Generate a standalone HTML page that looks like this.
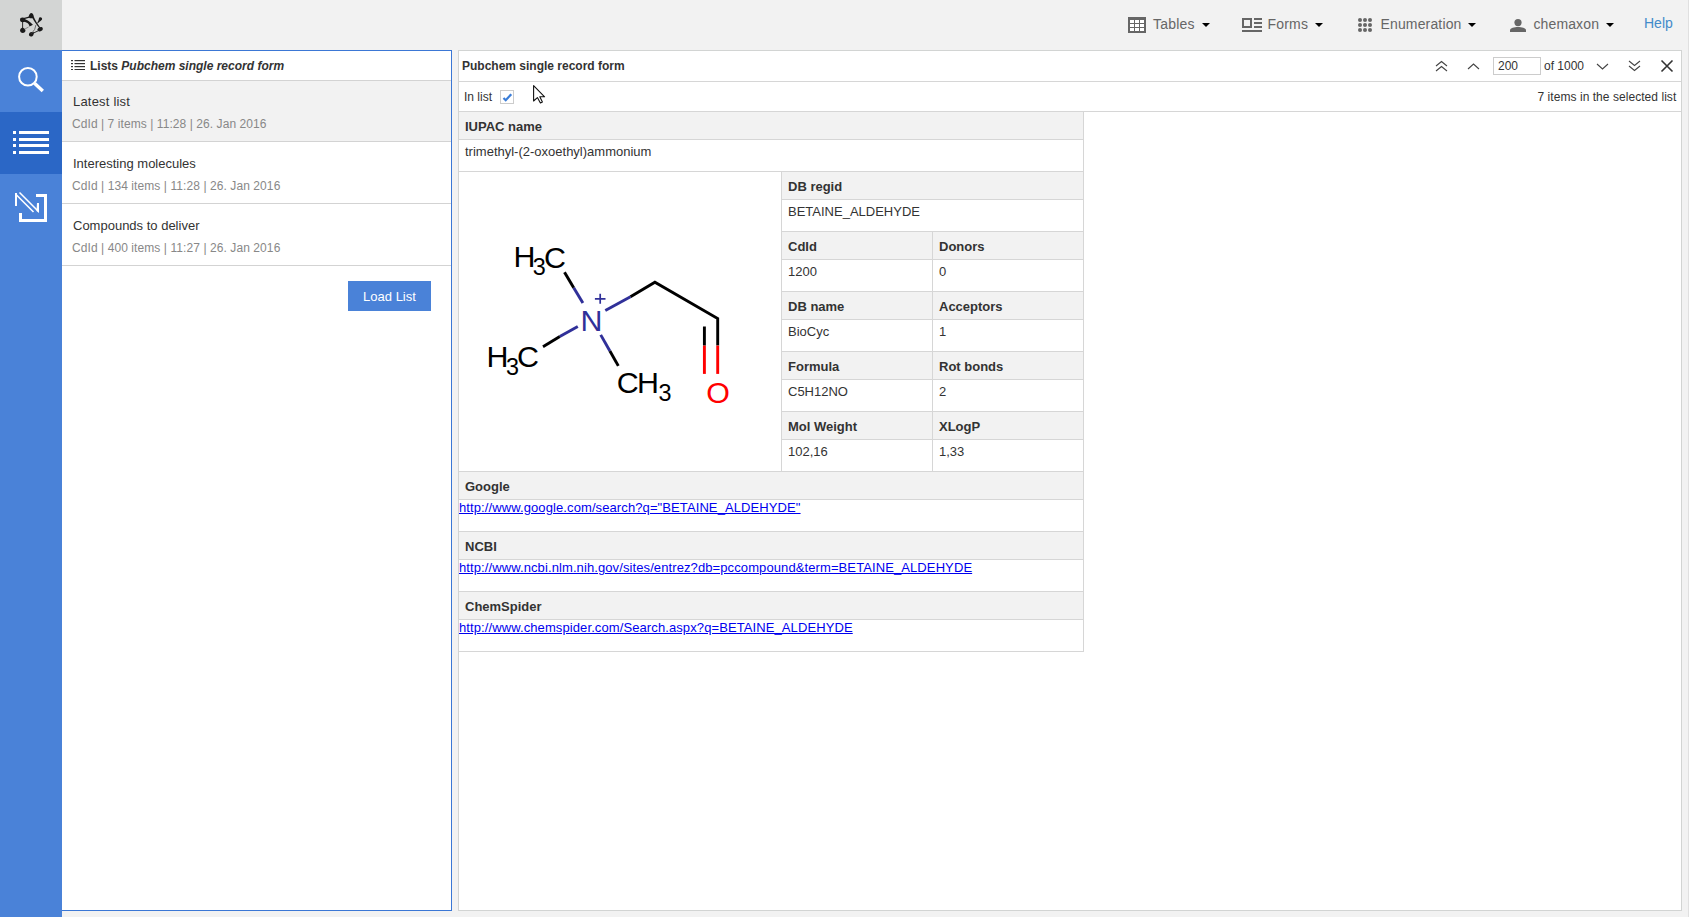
<!DOCTYPE html>
<html><head><meta charset="utf-8">
<style>
*{box-sizing:border-box}
html,body{margin:0;padding:0}
body{width:1689px;height:917px;overflow:hidden;position:relative;background:#f2f2f2;font-family:"Liberation Sans",sans-serif;color:#333}
.a{position:absolute}
.t12{font-size:12px;line-height:14px;white-space:nowrap}
.t13{font-size:13px;line-height:15px;white-space:nowrap}
.t14{font-size:14px;line-height:16px;white-space:nowrap}
.b{font-weight:bold}
</style></head><body>

<!-- top bar -->
<div class="a" style="left:0;top:0;width:62px;height:50px;background:#d3d5d4"></div>
<div class="a" style="left:1688px;top:0;width:1px;height:917px;background:#e0e0e0"></div>

<!-- left panel -->
<div class="a" style="left:61px;top:50px;width:391px;height:861px;border:1px solid #3b77d5;background:#fff"></div>

<!-- sidebar -->
<div class="a" style="left:0;top:50px;width:62px;height:867px;background:#4a82d8"></div>
<div class="a" style="left:0;top:112px;width:62px;height:62px;background:#2b67c6"></div>

<!-- right panel -->
<div class="a" style="left:458px;top:50px;width:1224px;height:861px;border:1px solid #d2d4d3;background:#fff"></div>


<!-- logo -->
<svg class="a" style="left:0;top:0" width="62" height="50" viewBox="0 0 62 50">
 <g fill="#1a1a1a">
  <!-- top node + band to right node -->
  <path d="M31.1 12.9 C32.5 12.9 33.7 14.6 33.8 16.6 C34.2 18.2 35.4 20.4 36.7 22.5 C38.1 24.6 39.6 26.6 40.9 28.4 L40.1 29 C38.5 27.3 37 25.5 35.8 23.6 C34.5 21.7 33.3 19.8 32.5 18.3 C32 18 31 18.2 30 18.2 C29 18.2 28.5 17.8 28.6 17 C28.8 15.4 29.8 12.9 31.1 12.9 Z"/>
  <!-- top to upper-left thin band -->
  <path d="M29.2 16.4 L22.6 18.2 L22.8 19.6 L29.6 17.8 Z"/>
  <!-- upper-left node -->
  <ellipse cx="22.6" cy="19.8" rx="2.6" ry="2.4"/>
  <!-- wedge -->
  <path d="M22.4 18.3 C26 19.2 30 21.4 32.9 24.8 C31.8 25.6 30.4 26.2 29.3 26.6 C29.5 25.4 28.8 24.2 27.4 23.1 C26 22.2 24.2 21.7 22.6 21.3 Z"/>
  <!-- lower-left node -->
  <path d="M22.6 27.6 C23.6 28 25.2 29 25.4 30.4 C25.6 32 24.2 32.9 22.8 32.9 C21.2 32.9 20.1 31.8 20.1 30.4 C20.1 29 21.4 28 22.6 27.6 Z"/>
  <!-- bottom node -->
  <path d="M33.8 32.2 C33.9 33.6 33.6 35 32.6 36 C31.6 36.8 30 36.8 29.3 35.8 C28.6 34.8 29 33.4 30 32.6 C31 32 32.6 32 33.8 32.2 Z"/>
  <!-- right node -->
  <path d="M37.3 29.4 C38.4 27.6 40 26.8 41.4 27 C42.6 27.2 43 28.4 42.7 29.6 C42.4 30.8 41 31.4 39.6 31.4 C38.8 31.4 37.8 30.8 37.3 29.4 Z"/>
  <!-- upper-right node -->
  <path d="M40.4 17.3 C41.4 17.3 42.2 18 42.1 19 C42 20 41 20.6 39.8 21.6 L37.6 23.4 L37.2 23 C38.2 21.6 38.6 20.2 38.9 18.6 C39.1 17.8 39.6 17.3 40.4 17.3 Z"/>
 </g>
 <g fill="none" stroke="#1a1a1a">
  <path d="M22.6 21 L22.6 28.5" stroke-width="0.9"/>
  <path d="M24.6 29.2 L28.6 27" stroke-width="0.7" stroke="#666"/>
  <path d="M31.6 33.4 Q35.6 29.6 35.9 25" stroke-width="0.8" stroke="#555"/>
  <path d="M33 33.3 L38.6 30.6" stroke-width="0.9"/>
 </g>
</svg>

<!-- nav -->
<svg class="a" style="left:1128px;top:17px" width="18" height="16" viewBox="0 0 18 16">
 <rect x="0" y="0" width="18" height="16" fill="#666"/>
 <g fill="#fff">
  <rect x="2" y="3" width="4" height="3"/><rect x="7" y="3" width="4" height="3"/><rect x="12" y="3" width="4" height="3"/>
  <rect x="2" y="7" width="4" height="3"/><rect x="7" y="7" width="4" height="3"/><rect x="12" y="7" width="4" height="3"/>
  <rect x="2" y="11" width="4" height="3"/><rect x="7" y="11" width="4" height="3"/><rect x="12" y="11" width="4" height="3"/>
 </g>
</svg>
<div class="a t14" style="left:1153px;top:16px;color:#666;letter-spacing:0.2px">Tables</div>
<svg class="a" style="left:1202px;top:23px" width="8" height="4" viewBox="0 0 8 4"><path d="M0 0H8L4 4Z" fill="#000"/></svg>

<svg class="a" style="left:1242px;top:18px" width="20" height="14" viewBox="0 0 20 14">
 <g fill="#666">
  <path d="M0 0H10V10H0Z M2 2V8H8V2Z" fill-rule="evenodd"/>
  <rect x="12" y="0" width="8" height="2"/><rect x="12" y="4" width="8" height="2"/><rect x="12" y="8" width="8" height="2"/>
  <rect x="0" y="12" width="20" height="2"/>
 </g>
</svg>
<div class="a t14" style="left:1267.5px;top:16px;color:#666;letter-spacing:0.2px">Forms</div>
<svg class="a" style="left:1315px;top:23px" width="8" height="4" viewBox="0 0 8 4"><path d="M0 0H8L4 4Z" fill="#000"/></svg>

<svg class="a" style="left:1358px;top:18px" width="14" height="14" viewBox="0 0 14 14">
 <g fill="#666">
  <circle cx="2" cy="2" r="2"/><circle cx="7" cy="2" r="2"/><circle cx="12" cy="2" r="2"/>
  <circle cx="2" cy="7" r="2"/><circle cx="7" cy="7" r="2"/><circle cx="12" cy="7" r="2"/>
  <circle cx="2" cy="12" r="2"/><circle cx="7" cy="12" r="2"/><circle cx="12" cy="12" r="2"/>
 </g>
</svg>
<div class="a t14" style="left:1380.5px;top:16px;color:#666;letter-spacing:0.15px">Enumeration</div>
<svg class="a" style="left:1468px;top:23px" width="8" height="4" viewBox="0 0 8 4"><path d="M0 0H8L4 4Z" fill="#000"/></svg>

<svg class="a" style="left:1510px;top:19px" width="16" height="13" viewBox="0 0 16 13">
 <g fill="#666">
  <circle cx="8" cy="3.6" r="3.6"/>
  <path d="M0 13V11.2C0 9 4.5 8 8 8S16 9 16 11.2V13Z"/>
 </g>
</svg>
<div class="a t14" style="left:1533.5px;top:16px;color:#666;letter-spacing:0.12px">chemaxon</div>
<svg class="a" style="left:1606px;top:23px" width="8" height="4" viewBox="0 0 8 4"><path d="M0 0H8L4 4Z" fill="#000"/></svg>

<div class="a t14" style="left:1644px;top:15px;color:#428bca">Help</div>

<!-- sidebar icons -->
<svg class="a" style="left:0;top:50px" width="62" height="186" viewBox="0 0 62 186">
 <g fill="none" stroke="#fff">
  <circle cx="27.9" cy="26.8" r="8.8" stroke-width="2"/>
  <path d="M34.5 33.3 L42.8 41" stroke-width="3.4"/>
 </g>
 <g fill="#fff">
  <rect x="13" y="81" width="3" height="3"/><rect x="19" y="81" width="30" height="3"/>
  <rect x="13" y="88" width="3" height="3"/><rect x="19" y="88" width="30" height="3"/>
  <rect x="13" y="94" width="3" height="3"/><rect x="19" y="94" width="30" height="3"/>
  <rect x="13" y="101" width="3" height="3"/><rect x="19" y="101" width="30" height="3"/>
 </g>
 <g fill="#fff">
  <path d="M36 144 H47 V172 H19 V163 H22 V169 H44 V147 H36 Z"/>
  <path d="M15 143 L17 143 L17 156 L15 156 Z"/>
 </g>
 <g fill="none" stroke="#fff" stroke-width="1.6">
  <path d="M15.5 144 L33.5 162"/>
  <path d="M19.5 142.5 L38 161"/>
 </g>
 <path d="M37 153 H39 V163 L36.5 161 Z" fill="#fff"/>
</svg>

<!-- left panel content -->
<svg class="a" style="left:71px;top:60px" width="14" height="10" viewBox="0 0 14 10">
 <g fill="#333">
  <rect x="0" y="0" width="2" height="1.2"/><rect x="3.5" y="0" width="10.5" height="1.2"/>
  <rect x="0" y="3" width="2" height="1.2"/><rect x="3.5" y="3" width="10.5" height="1.2"/>
  <rect x="0" y="6" width="2" height="1.2"/><rect x="3.5" y="6" width="10.5" height="1.2"/>
  <rect x="0" y="9" width="2" height="1.2"/><rect x="3.5" y="9" width="10.5" height="1.2"/>
 </g>
</svg>
<div class="a t12 b" style="left:90px;top:59px;color:#333">Lists <i>Pubchem single record form</i></div>
<div class="a" style="left:62px;top:80px;width:389px;height:1px;background:#d3d3d3"></div>

<div class="a" style="left:62px;top:81px;width:389px;height:60px;background:#f2f2f2"></div>
<div class="a" style="left:62px;top:141px;width:389px;height:1px;background:#d3d3d3"></div>
<div class="a" style="left:62px;top:203px;width:389px;height:1px;background:#d3d3d3"></div>
<div class="a" style="left:62px;top:265px;width:389px;height:1px;background:#d3d3d3"></div>

<div class="a t13" style="left:73px;top:94px;color:#333;letter-spacing:0.2px">Latest list</div>
<div class="a t12" style="left:72px;top:117px;color:#888;letter-spacing:0.07px">CdId | 7 items | 11:28 | 26. Jan 2016</div>
<div class="a t13" style="left:73px;top:156px;color:#333">Interesting molecules</div>
<div class="a t12" style="left:72px;top:179px;color:#888;letter-spacing:0.08px">CdId | 134 items | 11:28 | 26. Jan 2016</div>
<div class="a t13" style="left:73px;top:218px;color:#333">Compounds to deliver</div>
<div class="a t12" style="left:72px;top:241px;color:#888;letter-spacing:0.08px">CdId | 400 items | 11:27 | 26. Jan 2016</div>

<div class="a" style="left:348px;top:281px;width:83px;height:30px;background:#4a82d8"></div>
<div class="a t13" style="left:348px;top:289px;width:83px;text-align:center;color:#fff">Load List</div>

<!-- molecule -->
<svg class="a" style="left:459px;top:172px" width="322" height="299" viewBox="459 172 322 299" font-family="Liberation Sans, sans-serif">
 <g fill="none" stroke-width="2.9" stroke-linecap="butt" stroke-linejoin="miter">
  <path d="M582.9 303.1 L573.7 287.7" stroke="#303099"/>
  <path d="M573.7 287.7 L564.5 272.2" stroke="#000"/>
  <path d="M577.8 326.4 L559.8 336.6" stroke="#303099"/>
  <path d="M559.8 336.6 L543 346.8" stroke="#000"/>
  <path d="M600.7 334.9 L609.9 351" stroke="#303099"/>
  <path d="M609.9 351 L618.3 365.9" stroke="#000"/>
  <path d="M605.3 310.5 L630.5 296.7" stroke="#303099"/>
  <path d="M630.5 296.7 L654.9 282.2 L717.7 318.6 L717.7 345.6" stroke="#000"/>
  <path d="M717.7 345.6 L717.7 373.9" stroke="#f00"/>
  <path d="M704.4 326.5 L704.4 345.6" stroke="#000"/>
  <path d="M704.4 345.6 L704.4 373.9" stroke="#f00"/>
 </g>
 <path d="M594.9 298.8 H605.5 M600.2 293.7 V303.8" stroke="#303099" stroke-width="1.7" fill="none"/>
 <g font-size="30.4px" fill="#000" stroke="currentColor" stroke-width="0">
  <text x="513.4" y="267.1">H</text>
  <text x="544.1" y="267.6">C</text>
  <text x="486.5" y="366.8">H</text>
  <text x="516.9" y="367.2">C</text>
  <text x="616.8" y="393.4">C</text>
  <text x="637.1" y="393.4">H</text>
  <text x="580.4" y="330.6" fill="#303099">N</text>
  <text x="706.2" y="403.3" fill="#f00">O</text>
 </g>
 <g font-size="23.4px" fill="#000">
  <text x="532.7" y="274.9">3</text>
  <text x="506.1" y="374.8">3</text>
  <text x="658.6" y="401.2">3</text>
 </g>
</svg>

<!-- right panel content -->
<div class="a t12" style="left:462px;top:59px;font-weight:bold;color:#333">Pubchem single record form</div>
<div class="a" style="left:459px;top:81px;width:1222px;height:1px;background:#d6d6d6"></div>
<div class="a t12" style="left:464px;top:90px;color:#333">In list</div>
<div class="a" style="left:459px;top:111px;width:1222px;height:1px;background:#d6d6d6"></div>
<div class="a t12" style="left:1537.5px;top:90px;color:#333;letter-spacing:0.05px">7 items in the selected list</div>
<div class="a" style="left:459px;top:112px;width:624px;height:27px;background:#f2f2f2"></div>
<div class="a" style="left:459px;top:139px;width:625px;height:1px;background:#d6d6d6"></div>
<div class="a t13" style="left:465px;top:119px;font-weight:bold;color:#333">IUPAC name</div>
<div class="a" style="left:459px;top:171px;width:625px;height:1px;background:#d6d6d6"></div>
<div class="a t13" style="left:465px;top:144px;color:#333">trimethyl-(2-oxoethyl)ammonium</div>
<div class="a" style="left:781px;top:171px;width:1px;height:300px;background:#d6d6d6"></div>
<div class="a" style="left:782px;top:172px;width:301px;height:27px;background:#f2f2f2"></div>
<div class="a" style="left:782px;top:199px;width:302px;height:1px;background:#d6d6d6"></div>
<div class="a t13" style="left:788px;top:179px;font-weight:bold;color:#333">DB regid</div>
<div class="a" style="left:782px;top:231px;width:302px;height:1px;background:#d6d6d6"></div>
<div class="a t13" style="left:788px;top:204px;color:#333">BETAINE_ALDEHYDE</div>
<div class="a" style="left:782px;top:232px;width:301px;height:27px;background:#f2f2f2"></div>
<div class="a" style="left:782px;top:259px;width:302px;height:1px;background:#d6d6d6"></div>
<div class="a t13" style="left:788px;top:239px;font-weight:bold;color:#333">CdId</div>
<div class="a t13" style="left:939px;top:239px;font-weight:bold;color:#333">Donors</div>
<div class="a" style="left:932px;top:232px;width:1px;height:59px;background:#d6d6d6"></div>
<div class="a" style="left:782px;top:291px;width:302px;height:1px;background:#d6d6d6"></div>
<div class="a t13" style="left:788px;top:264px;color:#333">1200</div>
<div class="a t13" style="left:939px;top:264px;color:#333">0</div>
<div class="a" style="left:782px;top:292px;width:301px;height:27px;background:#f2f2f2"></div>
<div class="a" style="left:782px;top:319px;width:302px;height:1px;background:#d6d6d6"></div>
<div class="a t13" style="left:788px;top:299px;font-weight:bold;color:#333">DB name</div>
<div class="a t13" style="left:939px;top:299px;font-weight:bold;color:#333">Acceptors</div>
<div class="a" style="left:932px;top:292px;width:1px;height:59px;background:#d6d6d6"></div>
<div class="a" style="left:782px;top:351px;width:302px;height:1px;background:#d6d6d6"></div>
<div class="a t13" style="left:788px;top:324px;color:#333">BioCyc</div>
<div class="a t13" style="left:939px;top:324px;color:#333">1</div>
<div class="a" style="left:782px;top:352px;width:301px;height:27px;background:#f2f2f2"></div>
<div class="a" style="left:782px;top:379px;width:302px;height:1px;background:#d6d6d6"></div>
<div class="a t13" style="left:788px;top:359px;font-weight:bold;color:#333">Formula</div>
<div class="a t13" style="left:939px;top:359px;font-weight:bold;color:#333">Rot bonds</div>
<div class="a" style="left:932px;top:352px;width:1px;height:59px;background:#d6d6d6"></div>
<div class="a" style="left:782px;top:411px;width:302px;height:1px;background:#d6d6d6"></div>
<div class="a t13" style="left:788px;top:384px;color:#333">C5H12NO</div>
<div class="a t13" style="left:939px;top:384px;color:#333">2</div>
<div class="a" style="left:782px;top:412px;width:301px;height:27px;background:#f2f2f2"></div>
<div class="a" style="left:782px;top:439px;width:302px;height:1px;background:#d6d6d6"></div>
<div class="a t13" style="left:788px;top:419px;font-weight:bold;color:#333">Mol Weight</div>
<div class="a t13" style="left:939px;top:419px;font-weight:bold;color:#333">XLogP</div>
<div class="a" style="left:932px;top:412px;width:1px;height:59px;background:#d6d6d6"></div>
<div class="a" style="left:782px;top:471px;width:302px;height:1px;background:#d6d6d6"></div>
<div class="a t13" style="left:788px;top:444px;color:#333">102,16</div>
<div class="a t13" style="left:939px;top:444px;color:#333">1,33</div>
<div class="a" style="left:459px;top:471px;width:625px;height:1px;background:#d6d6d6"></div>
<div class="a" style="left:459px;top:472px;width:624px;height:27px;background:#f2f2f2"></div>
<div class="a" style="left:459px;top:499px;width:625px;height:1px;background:#d6d6d6"></div>
<div class="a t13" style="left:465px;top:479px;font-weight:bold;color:#333">Google</div>
<div class="a" style="left:459px;top:531px;width:625px;height:1px;background:#d6d6d6"></div>
<div class="a t13" style="left:459px;top:500px;color:#0000ee;text-decoration:underline;letter-spacing:0.1px">http://www.google.com/search?q="BETAINE_ALDEHYDE"</div>
<div class="a" style="left:459px;top:532px;width:624px;height:27px;background:#f2f2f2"></div>
<div class="a" style="left:459px;top:559px;width:625px;height:1px;background:#d6d6d6"></div>
<div class="a t13" style="left:465px;top:539px;font-weight:bold;color:#333">NCBI</div>
<div class="a" style="left:459px;top:591px;width:625px;height:1px;background:#d6d6d6"></div>
<div class="a t13" style="left:459px;top:560px;color:#0000ee;text-decoration:underline;letter-spacing:0.1px">http://www.ncbi.nlm.nih.gov/sites/entrez?db=pccompound&amp;term=BETAINE_ALDEHYDE</div>
<div class="a" style="left:459px;top:592px;width:624px;height:27px;background:#f2f2f2"></div>
<div class="a" style="left:459px;top:619px;width:625px;height:1px;background:#d6d6d6"></div>
<div class="a t13" style="left:465px;top:599px;font-weight:bold;color:#333">ChemSpider</div>
<div class="a" style="left:459px;top:651px;width:625px;height:1px;background:#d6d6d6"></div>
<div class="a t13" style="left:459px;top:620px;color:#0000ee;text-decoration:underline;letter-spacing:0.1px">http://www.chemspider.com/Search.aspx?q=BETAINE_ALDEHYDE</div>
<div class="a" style="left:1083px;top:111px;width:1px;height:541px;background:#d6d6d6"></div>
<svg class="a" style="left:1435px;top:60px" width="14" height="12" viewBox="0 0 14 12"><path d="M1 6 L6.5 1.5 L12 6 M1 11 L6.5 6.5 L12 11" fill="none" stroke="#444" stroke-width="1.1"/></svg>
<svg class="a" style="left:1467px;top:62px" width="13" height="9" viewBox="0 0 13 9"><path d="M1 7 L6.5 2 L12 7" fill="none" stroke="#444" stroke-width="1.1"/></svg>
<div class="a" style="left:1493px;top:57px;width:48px;height:18px;background:#ccc"></div>
<div class="a" style="left:1494px;top:58px;width:46px;height:16px;background:#fff"></div>
<div class="a t12" style="left:1498px;top:59px;color:#333">200</div>
<div class="a t12" style="left:1544px;top:59px;color:#333">of 1000</div>
<svg class="a" style="left:1596px;top:62px" width="13" height="9" viewBox="0 0 13 9"><path d="M1 2 L6.5 7 L12 2" fill="none" stroke="#444" stroke-width="1.1"/></svg>
<svg class="a" style="left:1628px;top:60px" width="14" height="12" viewBox="0 0 14 12"><path d="M1 1 L6.5 5.5 L12 1 M1 6 L6.5 10.5 L12 6" fill="none" stroke="#444" stroke-width="1.1"/></svg>
<svg class="a" style="left:1660px;top:59px" width="14" height="14" viewBox="0 0 14 14"><path d="M1.5 1.5 L12.5 12.5 M12.5 1.5 L1.5 12.5" fill="none" stroke="#333" stroke-width="1.6"/></svg>
<div class="a" style="left:500px;top:90px;width:14px;height:14px;background:#ccc"></div>
<div class="a" style="left:501px;top:91px;width:12px;height:12px;background:#fff"></div>
<svg class="a" style="left:500px;top:90px" width="14" height="14" viewBox="0 0 14 14"><path d="M3.5 8 L5.7 10.2 L11.3 4.2" fill="none" stroke="#3b7dd8" stroke-width="2.2"/></svg>
<svg class="a" style="left:530px;top:82px" width="18" height="24" viewBox="530 82 18 24"><path d="M533.6 85.6 V101 L537.4 97.6 L540.4 103 L542.4 102.1 L539.8 96.8 H544.6 Z" fill="#fff" stroke="#111" stroke-width="1.1" stroke-linejoin="round"/></svg>
</body></html>
